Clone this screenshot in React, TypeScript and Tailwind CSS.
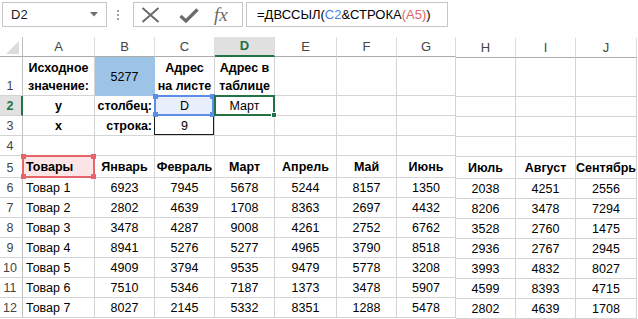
import React from 'react';

const base =
  'relative flex items-end border-r border-b border-r-[#d4d4d4] border-b-[#d4d4d4] leading-[18px] whitespace-nowrap';
const C = 'justify-center';
const L = 'justify-start pl-[3px]';
const R = 'justify-end pr-[2px]';

function Cell({ children, cls = '' }: { children?: React.ReactNode; cls?: string }) {
  return <div className={`${base} ${cls}`}>{children}</div>;
}

const hdr =
  'flex items-center justify-center border-r border-b border-r-[#dcdcdc] border-b-[#ababab] text-[#444] text-[13px]';
const hdrSel =
  'flex items-center justify-center border-r border-r-[#dcdcdc] border-b-2 border-b-[#217346] bg-[#e1e1e1] text-[#217346] font-bold text-[13px]';
const rh =
  'flex items-end justify-center pr-[2px] leading-[18px] border-r border-b border-r-[#bfbfbf] border-b-[#d4d4d4] text-[#444]';
const rhSel =
  'flex items-end justify-center pr-[1px] leading-[18px] border-r-2 border-b border-r-[#217346] border-b-[#d4d4d4] bg-[#e1e1e1] text-[#217346] font-bold';

const months = ['Январь', 'Февраль', 'Март', 'Апрель', 'Май', 'Июнь'];
const monthsR = ['Июль', 'Август', 'Сентябрь'];

const data: number[][] = [
  [6923, 7945, 5678, 5244, 8157, 1350, 2038, 4251, 2556],
  [2802, 4639, 1708, 8363, 2697, 4432, 8206, 3478, 7294],
  [3478, 4287, 9008, 4261, 2752, 6762, 3528, 2760, 1475],
  [8941, 5276, 5277, 4965, 3790, 8518, 2936, 2767, 2945],
  [4909, 3794, 9535, 9479, 5778, 3208, 3993, 4832, 8027],
  [7510, 5346, 7187, 1373, 3478, 5907, 4599, 8393, 4715],
  [8027, 2145, 5332, 8351, 1288, 5478, 2802, 4639, 1708],
];

const rowsTpl = 'grid-rows-[20px_39px_20px_20px_20px_22px_repeat(7,20px)]';

function Corner({ color, pos }: { color: string; pos: string }) {
  return <div className={`absolute w-[5px] h-[5px] ${color} ${pos}`} />;
}

export default function App() {
  return (
    <div className="w-[638px] h-[319px] overflow-hidden bg-white font-['Liberation_Sans',Arial,sans-serif] text-[12.5px] text-black">
      {/* Formula bar */}
      <div className="flex h-[37px] items-start pt-[2px]">
        <div className="ml-[2px] w-[105px] h-[25px] border border-[#c6c6c6] flex items-center justify-between pl-[8px] pr-[8px] text-[13px] text-[#222]">
          <span>D2</span>
          <svg width="8" height="5" viewBox="0 0 8 5">
            <path d="M0 0 L8 0 L4 4.5 Z" fill="#6f6f6f" />
          </svg>
        </div>
        <div className="ml-[10px] mt-[8px] flex flex-col gap-[2px]">
          <div className="w-[2px] h-[2px] bg-[#a0a0a0]" />
          <div className="w-[2px] h-[2px] bg-[#a0a0a0]" />
          <div className="w-[2px] h-[2px] bg-[#a0a0a0]" />
        </div>
        <div className="ml-[14px] w-[110px] h-[25px] border border-[#c6c6c6] flex items-center pl-[7px]">
          <svg width="19" height="16" viewBox="0 0 19 16">
            <path d="M1.5 1 L17.5 15 M17.5 1 L1.5 15" stroke="#6a6a6a" strokeWidth="2" fill="none" />
          </svg>
          <svg className="ml-[19px] mt-[2px]" width="20" height="15" viewBox="0 0 20 15">
            <path d="M1.5 8 L7 13 L18.5 1.5" stroke="#6a6a6a" strokeWidth="3.2" fill="none" />
          </svg>
          <span className="ml-[15px] font-['Liberation_Serif',serif] italic text-[19px] leading-none text-[#6a6a6a]">
            fx
          </span>
        </div>
        <div className="ml-[3px] w-[202px] h-[25px] border border-[#c6c6c6] flex items-center pl-[10px] text-[13px] whitespace-nowrap">
          <span>=ДВССЫЛ(</span>
          <span className="text-[#4a7fe0]">C2</span>
          <span>&amp;СТРОКА</span>
          <span className="text-[#e0646a]">(A5)</span>
          <span>)</span>
        </div>
      </div>

      {/* Sheet */}
      <div className="flex items-start">
        {/* Left part: row headers + A..G */}
        <div className={`grid grid-cols-[23px_72px_60px_60px_60px_62px_60px_59px] ${rowsTpl}`}>
          {/* header row */}
          <div className="relative border-r border-b border-r-[#bfbfbf] border-b-[#ababab]">
            <svg className="absolute left-[6px] top-[4px]" width="13" height="13" viewBox="0 0 13 13">
              <path d="M13 0 L13 13 L0 13 Z" fill="#dcdcdc" />
            </svg>
          </div>
          <div className={hdr}>A</div>
          <div className={hdr}>B</div>
          <div className={hdr}>C</div>
          <div className={hdrSel}>D</div>
          <div className={hdr}>E</div>
          <div className={hdr}>F</div>
          <div className={hdr}>G</div>

          {/* row 1 */}
          <div className={rh}>1</div>
          <Cell cls={`${C} font-bold`}>
            <div className="text-center">
              Исходное
              <br />
              значение:
            </div>
          </Cell>
          <div className="flex items-center justify-center pt-[2px] bg-[#9dc3e6] border-r border-b border-r-[#9dc3e6] border-b-[#9dc3e6]">
            5277
          </div>
          <Cell cls={`${C} font-bold`}>
            <div className="text-center">
              Адрес
              <br />
              на листе
            </div>
          </Cell>
          <Cell cls={`${C} font-bold`}>
            <div className="text-center">
              Адрес в
              <br />
              таблице
            </div>
          </Cell>
          <Cell />
          <Cell />
          <Cell />

          {/* row 2 */}
          <div className={rhSel}>2</div>
          <Cell cls={`${C} font-bold`}>y</Cell>
          <Cell cls={`${R} font-bold`}>столбец:</Cell>
          <Cell cls={`${C} bg-[#e8eefb]`}>
            D
            <div className="absolute left-[-1px] top-[-1px] right-0 bottom-[-1px] border-2 border-[#5b8ee6] z-10 pointer-events-none">
              <Corner color="bg-[#5b8ee6]" pos="left-[-3px] top-[-3px]" />
              <Corner color="bg-[#5b8ee6]" pos="right-[-3px] top-[-3px]" />
              <Corner color="bg-[#5b8ee6]" pos="left-[-3px] bottom-[-3px]" />
              <Corner color="bg-[#5b8ee6]" pos="right-[-3px] bottom-[-3px]" />
            </div>
          </Cell>
          <Cell cls={C}>
            Март
            <div className="absolute left-[-1px] top-[-1px] right-[-1px] bottom-[-1px] border-2 border-[#217346] z-20 pointer-events-none">
              <div className="absolute right-[-4px] bottom-[-4px] w-[6px] h-[6px] bg-[#217346] border border-white" />
            </div>
          </Cell>
          <Cell />
          <Cell />
          <Cell />

          {/* row 3 */}
          <div className={rh}>3</div>
          <Cell cls={`${C} font-bold`}>x</Cell>
          <Cell cls={`${R} font-bold`}>строка:</Cell>
          <Cell cls={C}>
            9
            <div className="absolute left-[-1px] top-[-1px] right-0 bottom-0 border border-[#1a1a1a] z-[5] pointer-events-none" />
          </Cell>
          <Cell />
          <Cell />
          <Cell />
          <Cell />

          {/* row 4 */}
          <div className={rh}>4</div>
          <Cell />
          <Cell />
          <Cell />
          <Cell />
          <Cell />
          <Cell />
          <Cell />

          {/* row 5 */}
          <div className={rh}>5</div>
          <Cell cls={`${L} font-bold bg-[#fbe5e6] pb-[1px]`}>
            Товары
            <div className="absolute left-[-1px] top-[-1px] right-[-1px] bottom-[-1px] border-2 border-[#e6646b] z-10 pointer-events-none">
              <Corner color="bg-[#e6646b]" pos="left-[-3px] top-[-3px]" />
              <Corner color="bg-[#e6646b]" pos="right-[-3px] top-[-3px]" />
              <Corner color="bg-[#e6646b]" pos="left-[-3px] bottom-[-3px]" />
              <Corner color="bg-[#e6646b]" pos="right-[-3px] bottom-[-3px]" />
            </div>
          </Cell>
          {months.map((m) => (
            <Cell key={m} cls={`${C} font-bold pb-[1px]`}>
              {m}
            </Cell>
          ))}

          {/* data rows */}
          {data.map((row, i) => (
            <React.Fragment key={i}>
              <div className={rh}>{i + 6}</div>
              <Cell cls={L}>{`Товар ${i + 1}`}</Cell>
              {row.slice(0, 6).map((v, j) => (
                <Cell key={j} cls={C}>
                  {v}
                </Cell>
              ))}
            </React.Fragment>
          ))}
        </div>

        {/* Right part: H..J */}
        <div className={`mt-[1px] grid grid-cols-[60px_60px_61px] ${rowsTpl}`}>
          <div className={hdr}>H</div>
          <div className={hdr}>I</div>
          <div className={hdr}>J</div>
          {Array.from({ length: 12 }).map((_, k) => (
            <Cell key={`e${k}`} />
          ))}
          {monthsR.map((m) => (
            <Cell key={m} cls={`${C} font-bold pb-[1px]`}>
              {m}
            </Cell>
          ))}
          {data.map((row, i) => (
            <React.Fragment key={i}>
              {row.slice(6).map((v, j) => (
                <Cell key={j} cls={C}>
                  {v}
                </Cell>
              ))}
            </React.Fragment>
          ))}
        </div>
      </div>
    </div>
  );
}
